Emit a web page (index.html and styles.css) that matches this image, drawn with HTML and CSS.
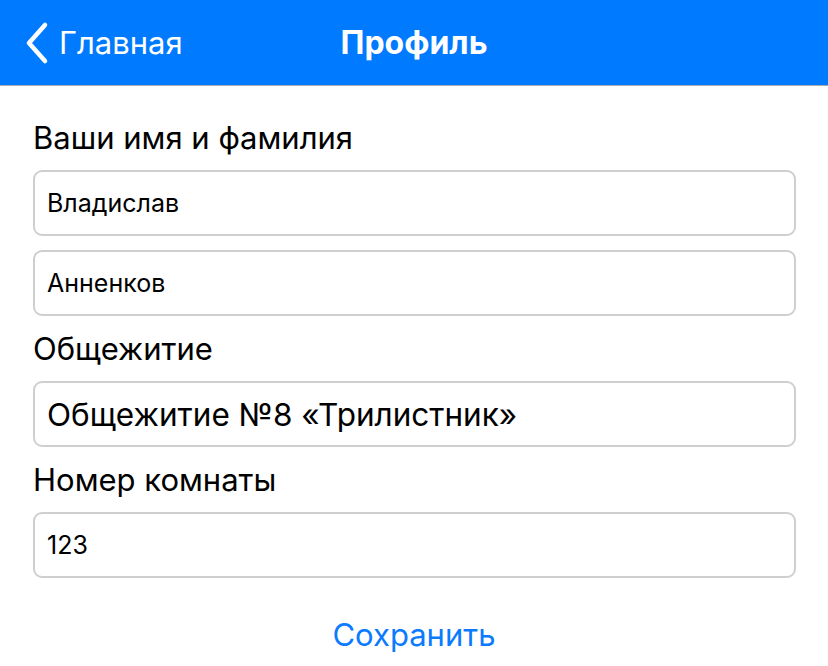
FILE: index.html
```html
<!DOCTYPE html>
<html lang="ru">
<head>
<meta charset="utf-8">
<title>Профиль</title>
<link rel="stylesheet" href="styles.css">
</head>
<body>
<header class="navbar">
  <a class="back" href="#">
    <svg class="chev" width="26" height="44" viewBox="0 0 26 44"><path d="M21 4 L5 22 L21 40" fill="none" stroke="#fff" stroke-width="4.5" stroke-linecap="round" stroke-linejoin="round"/></svg>
    <span class="back-text">Главная</span>
  </a>
  <h1 class="title">Профиль</h1>
</header>
<main class="form">
  <div class="label first">Ваши имя и фамилия</div>
  <input class="field" type="text" value="Владислав">
  <input class="field gap" type="text" value="Анненков">
  <div class="label">Общежитие</div>
  <input class="field big" type="text" value="Общежитие №8 «Трилистник»">
  <div class="label">Номер комнаты</div>
  <input class="field" type="text" value="123">
  <div class="actions"><button class="save">Сохранить</button></div>
</main>
</body>
</html>
```
FILE: styles.css
```css
html, body { margin: 0; padding: 0; background: #fff; }
body { font-family: Inter, "Noto Sans", sans-serif; color: #000; width: 828px; height: 666px; overflow: hidden; }
.navbar {
  position: relative;
  height: 85px;
  background: #007aff;
  border-bottom: 1px solid #a9a9ad;
  display: flex;
  align-items: center;
  justify-content: center;
}
.back {
  position: absolute;
  left: 24px;
  top: 21px;
  display: flex;
  align-items: center;
  gap: 9px;
  color: #fff;
  text-decoration: none;
}
.chev { display: block; }
.back-text { font-size: 31px; line-height: 44px; }
.title { margin: 0; color: #fff; font-size: 32px; font-weight: 700; line-height: 44px; }
.form { padding: 0 33px; display: flex; flex-direction: column; }
.label { font-size: 31px; line-height: 34px; margin: 16px 0 15px; }
.label.first { margin-top: 35px; }
.field {
  box-sizing: border-box;
  width: 763px;
  height: 66px;
  margin: 0;
  border: 2px solid #cfcfcf;
  border-radius: 9px;
  padding: 0 12px;
  font-family: Inter, "Noto Sans", sans-serif;
  font-size: 25px;
  color: #000;
  background: #fff;
  outline: none;
}
.field.gap { margin-top: 14px; }
.field.big { font-size: 31.5px; }
.actions { display: flex; justify-content: center; margin-top: 37px; }
.save {
  border: 0;
  background: none;
  padding: 0;
  font-family: Inter, "Noto Sans", sans-serif;
  font-size: 31px;
  line-height: 40px;
  color: #0a7aff;
}
```
